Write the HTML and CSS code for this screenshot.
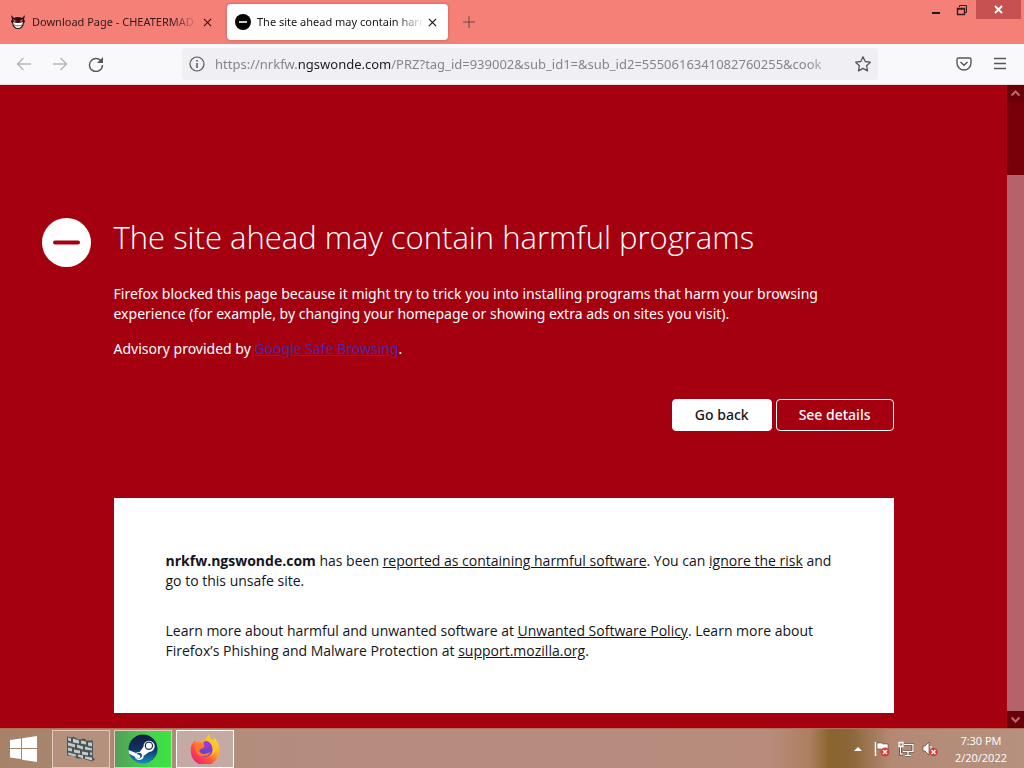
FILE: index.html
```html
<!DOCTYPE html>
<html lang="en">
<head>
<meta charset="utf-8">
<meta name="viewport" content="width=device-width, initial-scale=1">
<title>The site ahead may contain harmful programs</title>
<link rel="stylesheet" href="styles.css">
</head>
<body>
<header class="titlebar">
  <div class="tabs">
    <div class="tab">
      <svg class="favicon" viewBox="0 0 16 16" aria-hidden="true"><path d="M1 1l3 3q4-2 8 0l3-3-1 5q2 1 0 3-1 6-6 6T2 9Q0 7 2 6z" fill="#241015"/><path d="M3 5l4 2-3 1zM13 5L9 7l3 1z" fill="#f04a4a"/><path d="M3 8q5 2 10 0-1 6-5 6T3 8z" fill="#fff"/><path d="M4 11q4 2 8 0" fill="none" stroke="#777"/></svg>
      <span class="tab-title">Download Page - CHEATERMAD</span>
      <button class="tab-close" aria-label="Close tab"><svg viewBox="0 0 10 10"><path d="M1 1l8 8M9 1L1 9"/></svg></button>
    </div>
    <div class="tab tab-active">
      <svg class="favicon" viewBox="0 0 16 16" aria-hidden="true"><circle cx="8" cy="8" r="8" fill="#050505"/><path d="M4 8h8" stroke="#fff" stroke-width="1.6"/></svg>
      <span class="tab-title">The site ahead may contain harm</span>
      <button class="tab-close" aria-label="Close tab"><svg viewBox="0 0 10 10"><path d="M1 1l8 8M9 1L1 9"/></svg></button>
    </div>
    <button class="new-tab" aria-label="New tab"><svg viewBox="0 0 12 12"><path d="M6 0v12M0 6h12"/></svg></button>
  </div>
  <div class="window-controls">
    <button class="window-button" aria-label="Minimize"><svg viewBox="0 0 12 12"><path d="M2 9h8" stroke="#24191a" stroke-width="2"/></svg></button>
    <button class="window-button" aria-label="Restore"><svg viewBox="0 0 12 12" fill="none" stroke="#301c1c"><path d="M3.5 3V1.5h7v7H9"/><path d="M1.5 4.5h7v6h-7zM1 5h8" stroke-width="1.4"/></svg></button>
    <button class="window-button window-close" aria-label="Close"><svg viewBox="0 0 12 12"><path d="M2 2l7 7M9 2L2 9" stroke="#fff" stroke-width="1.8"/></svg></button>
  </div>
</header>
<nav class="toolbar" aria-label="Navigation">
  <button class="tool" aria-label="Back" disabled><svg viewBox="0 0 16 16"><path d="M15 8H1.500M7.500 2l-6 6 6 6"/></svg></button>
  <button class="tool" aria-label="Forward" disabled><svg viewBox="0 0 16 16"><path d="M1 8h13.500M8.500 2l6 6-6 6"/></svg></button>
  <button class="tool" aria-label="Reload"><svg viewBox="0 0 16 16"><path d="M14 6.500A6.500 6.500 0 1 0 14.500 9"/><path d="M15 1v6H9z" fill="#55555c" stroke="none"/></svg></button>
  <div class="address">
    <button class="address-icon" aria-label="Site information"><svg viewBox="0 0 16 16"><circle cx="8" cy="8" r="7"/><path d="M8 7v5M8 4v1.500" stroke-width="1.500"/></svg></button>
    <a class="url" href="#">https://nrkfw.<span class="domain">ngswonde.com</span>/PRZ?tag_id=939002&amp;sub_id1=&amp;sub_id2=5550616341082760255&amp;cook</a>
    <button class="address-icon" aria-label="Bookmark this page"><svg viewBox="0 0 16 16"><path d="M8 .8l2.200 4.700 5.100.7-3.700 3.500.9 5.200L8 12.400l-4.500 2.500.9-5.200L.7 6.200l5.100-.7z" stroke-linejoin="round" stroke-width="1.300"/></svg></button>
  </div>
  <div class="toolbar-end">
    <button class="tool" aria-label="Save to Pocket"><svg viewBox="0 0 16 16"><path d="M2.500 2h11q1.500 0 1.500 1.500V7a7 7 0 0 1-14 0V3.500Q1 2 2.500 2z"/><path d="M4.500 6L8 9.300 11.500 6" stroke-width="1.500"/></svg></button>
    <button class="tool" aria-label="Open menu"><svg viewBox="0 0 16 16"><path d="M2 2.500h12M2 7.500h12M2 12.500h12"/></svg></button>
  </div>
</nav>
<div class="viewport">
  <main class="warning">
    <svg class="warning-icon" viewBox="0 0 49 49" aria-hidden="true"><circle cx="24.500" cy="24.500" r="24.500" fill="#fff"/><path d="M13 24.500h23" stroke="#a4000f" stroke-width="4" stroke-linecap="round"/></svg>
    <section class="message">
      <h1>The site ahead may contain harmful programs</h1>
      <p>Firefox blocked this page because it might try to trick you into installing programs that harm your browsing experience (for example, by changing your homepage or showing extra ads on sites you visit).</p>
      <p>Advisory provided by <a class="advisory-link" href="#">Google Safe Browsing</a>.</p>
      <div class="actions">
        <button class="action action-primary">Go back</button>
        <button class="action">See details</button>
      </div>
    </section>
    <section class="details">
      <p><strong>nrkfw.ngswonde.com</strong> has been <a href="#">reported as containing harmful software</a>. You can <a href="#">ignore the risk</a> and go to this unsafe site.</p>
      <p>Learn more about harmful and unwanted software at <a href="#">Unwanted Software Policy</a>. Learn more about Firefox’s Phishing and Malware Protection at <a href="#">support.mozilla.org</a>.</p>
    </section>
  </main>
  <div class="scrollbar" aria-hidden="true">
    <svg class="scroll-arrow" viewBox="0 0 17 17"><path d="M4.500 10.500l4-4 4 4"/></svg>
    <div class="scroll-track"><div class="scroll-thumb"></div></div>
    <svg class="scroll-arrow" viewBox="0 0 17 17"><path d="M4.500 6.500l4 4 4-4"/></svg>
  </div>
</div>
<footer class="taskbar">
  <button class="start" aria-label="Start"><svg viewBox="0 0 28 26"><path d="M0 4l11-1.500V12H0zM12 2.300L27 0v12H12zM0 13h11v10L0 21.500zM12 13h15v13l-15-2.300z" fill="#fff"/></svg></button>
  <button class="task" aria-label="Firewall">
    <svg viewBox="0 0 30 27"><path d="M1 1l5 1 1-1 6 3 6-1 1 2 7 0v17l2 2-3 2-9-3-6 0-4-3-6 0z" fill="#4e5456"/><g fill="#c3cbcc"><path d="M2 2l3 1v3L2 5zM7 3l6 2v3L7 7zM15 5l5 1v3l-5-1zM22 7l4 0v4l-4-1zM2 7l7 2v3L2 10zM11 9l6 2v3l-6-2zM19 11l7 2v2l-7-1zM2 12l4 1v3l-4-1zM8 14l6 1v3l-6-1zM16 16l6 1v3l-6-1zM24 17l2 0v3l-2-1zM2 17l8 2v2l-8-2zM12 19l5 1v3l-5-2zM19 21l7 1v3l-7-2z"/></g></svg>
  </button>
  <button class="task task-steam" aria-label="Steam">
    <svg viewBox="0 0 32 32"><defs><linearGradient id="steam" x2="0" y2="1"><stop stop-color="#101a43"/><stop offset=".5" stop-color="#12335f"/><stop offset="1" stop-color="#168fbd"/></linearGradient></defs><circle cx="16" cy="16" r="15.500" fill="url(#steam)"/><path d="M.5 17l8 3.200q2-1.400 4-.9l4-5.800a6 6 0 1 1 6 5.600l-5.700 4.200a4.800 4.800 0 0 1-9.400 1L1.200 21z" fill="#fff"/><circle cx="22.300" cy="12.500" r="4.500" fill="#12335f"/><circle cx="22.300" cy="12.500" r="3.200" fill="#fff"/><path d="M9 21l2.500 1a2 2 0 0 1-1 4L8 25a4 4 0 0 0 7-3 4 4 0 0 0-6-1z" fill="#1a5383"/></svg>
  </button>
  <button class="task task-firefox" aria-label="Firefox">
    <svg viewBox="0 0 32 32"><defs><linearGradient id="fox" x1="1" y1="0" x2=".2" y2="1"><stop stop-color="#fff14b"/><stop offset=".4" stop-color="#ffad28"/><stop offset=".7" stop-color="#ff4e43"/><stop offset="1" stop-color="#ed197f"/></linearGradient><linearGradient id="globe" x2="0" y2="1"><stop stop-color="#a33be4"/><stop offset="1" stop-color="#5843cc"/></linearGradient></defs><path d="M20 0c1 4 3 5 5 7l1-3c4 5 6 10 5 15a15 15 0 0 1-30-1c-1-6 2-9 5-12v3c2-1 4-1 6-1 3-1 5-3 8-8z" fill="url(#fox)"/><path d="M14 9c5-4 10 1 10 8a8 8 0 0 1-15 3c-1-3 0-5 1-7l5-1z" fill="url(#globe)"/><path d="M6 11l6-1 4 3-2 2-4 2c0 3 3 5 6 4 3 0 4-2 6-1-3 5-12 5-15 0-2-3-2-6-1-9z" fill="#ff762b"/><path d="M20 1c-2 4-1 6 2 9 4 5 3 10-1 14 7-3 9-11 4-17-3-3-5-3-5-6z" fill="#ffc332"/></svg>
  </button>
  <div class="tray">
    <button class="tray-button" aria-label="Show hidden icons"><svg viewBox="0 0 16 16"><path d="M4 10l4-4 4 4z" fill="#fff"/></svg></button>
    <button class="tray-button" aria-label="Action center"><svg viewBox="0 0 16 16"><path d="M1.500 1v14" stroke="#fff" stroke-width="1.500"/><path d="M3 2h5l1 1h5v6H8L7 8H3z" fill="#fff" stroke="#59413a" stroke-width=".6"/><circle cx="11" cy="11" r="4.500" fill="#d43d3f"/><path d="M9 9l4 4M13 9l-4 4" stroke="#fff" stroke-width="1.400"/></svg></button>
    <button class="tray-button" aria-label="Network"><svg viewBox="0 0 16 16" fill="none"><path d="M5 3.500h10v7H5M10 11v3M7 14.500h6M2.500 6v7h2" stroke="#544038" stroke-width="3"/><path d="M1 1.500h4v4H1zM6 3.500h9v7H5M10 11v3M7 14.500h6M2.500 6v7h2" stroke="#fff" stroke-width="1.300"/></svg></button>
    <button class="tray-button" aria-label="Volume muted"><svg viewBox="0 0 16 16"><path d="M1 5h2l4-4v13l-4-4H1z" fill="#fff" stroke="#59413a" stroke-width=".7"/><path d="M9 5v5" stroke="#fff"/><circle cx="11.500" cy="11" r="4.300" fill="#d43d3f"/><path d="M9.500 9l4 4M13.500 9l-4 4" stroke="#fff" stroke-width="1.400"/></svg></button>
    <time class="clock" datetime="2022-02-20T19:30"><span>7:30 PM</span><span>2/20/2022</span></time>
  </div>
</footer>
</body>
</html>
```
FILE: styles.css
```css
* { box-sizing: border-box; }
body {
  margin: 0;
  min-height: 100vh;
  display: flex;
  flex-direction: column;
  font-family: "Open Sans", "Noto Sans", sans-serif;
  font-size: 14px;
  line-height: 20px;
}
button {
  display: flex;
  align-items: center;
  justify-content: center;
  padding: 0;
  border: 0;
  background: none;
  font: inherit;
  color: inherit;
}
svg { display: block; flex: none; }

.titlebar {
  display: flex;
  justify-content: space-between;
  height: 44px;
  background: #f58078;
}
.tabs { display: flex; align-items: center; }
.tab {
  display: flex;
  align-items: center;
  width: 221px;
  height: 36px;
  margin-left: 4px;
  padding: 0 10px 0 8px;
  border-radius: 4px;
  color: #351719;
  font-family: "Noto Sans", "Open Sans", sans-serif;
  font-size: 11px;
}
.tab:first-child { margin-left: 2px; }
.tab-active { background: #fff; color: #151515; box-shadow: 0 0 3px #a8605c; }
.favicon { width: 16px; height: 16px; margin-right: 6px; }
.tab-title {
  flex: 1;
  min-width: 0;
  overflow: hidden;
  white-space: nowrap;
  mask-image: linear-gradient(to left, transparent, #000 28px);
}
.tab-close { width: 12px; height: 20px; margin-left: 2px; }
.tab-close svg { width: 9px; height: 9px; stroke: currentColor; stroke-width: 1.3; }
.new-tab { width: 42px; height: 36px; }
.new-tab svg { width: 12px; height: 12px; stroke: #6c4642; }
.window-controls { display: flex; align-items: flex-start; padding-right: 3px; }
.window-button { width: 26px; height: 19px; }
.window-button svg { width: 12px; height: 12px; }
.window-close { width: 45px; margin-left: 1px; background: #c75050; }

.toolbar {
  display: flex;
  align-items: center;
  height: 41px;
  padding: 0 6px;
  background: #f9f9fb;
  border-bottom: 1px solid #e8dadd;
}
.tool { width: 36px; height: 32px; }
.tool svg { width: 16px; height: 16px; fill: none; stroke: #55555c; stroke-width: 1.4; }
.tool:disabled { opacity: .4; }
.address {
  flex: 1;
  min-width: 0;
  display: flex;
  align-items: center;
  height: 32px;
  margin: 0 68px;
  padding: 0 7px 0 6px;
  border-radius: 4px;
  background: #f0f0f4;
}
.address-icon { width: 17px; height: 24px; }
.address-icon svg { width: 16px; height: 16px; fill: none; stroke: #55555c; stroke-width: 1.2; }
.url {
  flex: 1;
  min-width: 0;
  margin: 0 11px 0 10px;
  overflow: hidden;
  white-space: nowrap;
  color: #84848b;
  font-family: "Noto Sans", "Open Sans", sans-serif;
  font-size: 13px;
  text-decoration: none;
  mask-image: linear-gradient(to left, transparent, #000 36px);
}
.domain { color: #1c1b22; }
.toolbar-end { display: flex; }

.viewport { flex: 1; display: flex; background: #a4000f; color: #fff; }
.warning {
  flex: 1;
  min-width: 0;
  display: grid;
  grid-template-columns: 1fr minmax(0, 780px) 1fr;
  align-content: start;
  padding: 130px 0 15px;
}
.warning-icon { width: 49px; height: 49px; margin: 3px 23px 0 0; justify-self: end; }
.message { grid-column: 2; font-family: "Noto Sans", "Open Sans", sans-serif; }
h1 {
  margin: 0 0 25px;
  font-family: "Open Sans", "Noto Sans", sans-serif;
  font-size: 31px;
  line-height: 44px;
  font-weight: 300;
}
p { margin: 0 0 15px; }
.message p { max-width: 740px; }
.advisory-link { color: #4d27a3; }
.actions { display: flex; justify-content: flex-end; gap: 4px; margin-top: 40px; }
.action {
  height: 32px;
  padding: 0 22px;
  border: 1px solid #fff;
  border-radius: 4px;
  font-weight: 500;
}
.action-primary { background: #fff; color: #15141a; }
.details {
  grid-column: 2;
  margin-top: 67px;
  padding: 53px 52px 52px;
  background: #fff;
  color: #15141a;
}
.details p { margin-bottom: 30px; }
.details p:last-child { margin-bottom: 0; }
.details a { color: inherit; }

.scrollbar { display: flex; flex-direction: column; width: 17px; background: #780009; }
.scroll-arrow { width: 17px; height: 17px; fill: none; stroke: #bd6870; stroke-width: 2; background: #68000a; }
.scroll-track { flex: 1; display: flex; flex-direction: column; justify-content: flex-end; }
.scroll-thumb { height: 88%; background: #b4636b; }

.taskbar {
  display: flex;
  align-items: center;
  height: 40px;
  background: linear-gradient(90deg, #a58268, #b08e7a 20%, #b58c80 30%, #b88b7c 75%, #ad8061 79%, #8a6530 81%, #8a6638 83%, #b48974 87%, #b5917f);
  border-top: 1px solid #b86d56;
}
.start { width: 48px; height: 39px; margin-right: 4px; }
.start svg { width: 28px; height: 26px; }
.task {
  width: 58px;
  height: 38px;
  margin-right: 4px;
  border: 1px solid #e1c9bb;
  background: #b4917d;
}
.task svg { width: 30px; height: 30px; }
.task-steam { background: linear-gradient(90deg, #559d5a, #43d64c 65%, #3ce340); }
.task-firefox { background: #c5aaa3; border-color: #fff; }
.tray { display: flex; align-items: center; margin-left: auto; padding-right: 17px; color: #fff; }
.tray-button { width: 24px; height: 32px; }
.tray-button svg { width: 16px; height: 16px; }
.clock {
  display: flex;
  flex-direction: column;
  align-items: center;
  margin-left: 13px;
  font-size: 11px;
  line-height: 17px;
}
```
